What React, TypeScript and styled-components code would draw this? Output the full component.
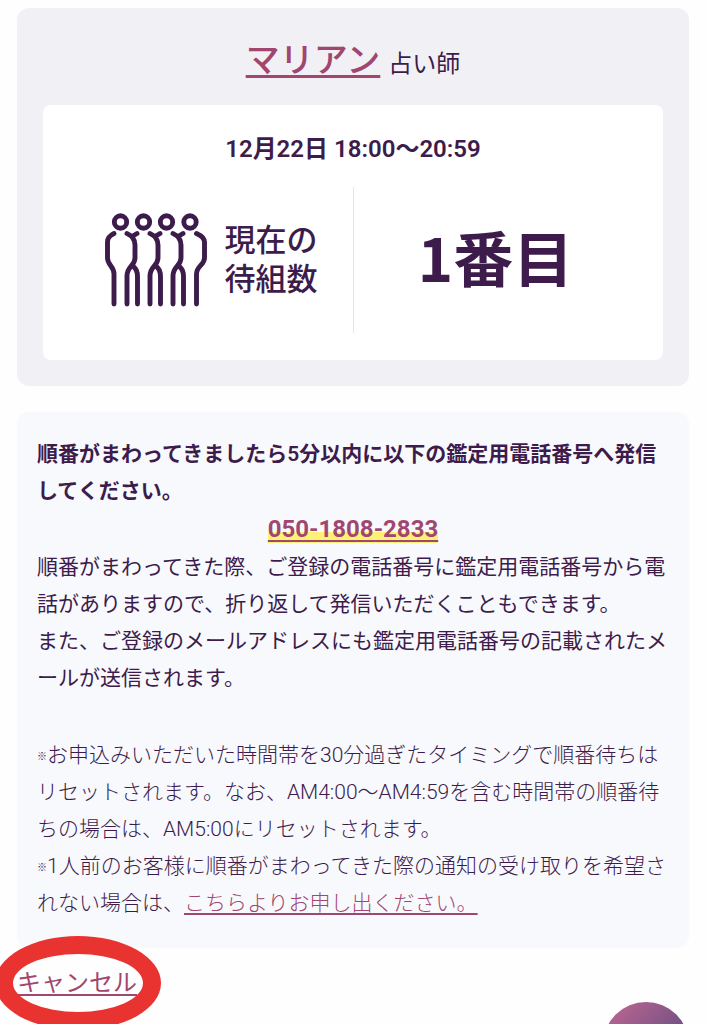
import React from "react";
import styled, { createGlobalStyle } from "styled-components";

const ink = "#3d1c4c";
const rose = "#a1466f";

const GlobalStyle = createGlobalStyle`
  *, *::before, *::after { box-sizing: border-box; }
  body {
    margin: 0;
    background: #fefefe;
    color: ${ink};
    font-family: Roboto, "Noto Sans CJK JP", sans-serif;
  }
  p, h1 { margin: 0; font-weight: inherit; }
`;

const Page = styled.main`
  display: flex;
  flex-direction: column;
  gap: 26px;
  padding: 8px 17px 32px;
  overflow: hidden;
`;

const StatusCard = styled.section`
  padding: 26px;
  border-radius: 12px;
  background: #f1f0f5;
`;

const AdvisorTitle = styled.h1`
  display: flex;
  justify-content: center;
  align-items: baseline;
  gap: 8px;
  height: 71px;
  font-size: 24px;
  line-height: 52px;
`;

const AdvisorLink = styled.a`
  color: ${rose};
  font-size: 34px;
  font-weight: 500;
  text-decoration: underline;
  text-decoration-thickness: 3px;
  text-underline-offset: 3px;
`;

const QueuePanel = styled.div`
  padding: 26px 26px 27px;
  border-radius: 8px;
  background: #fff;
`;

const Slot = styled.p`
  text-align: center;
  font-size: 24px;
  line-height: 36px;
  font-weight: 600;
`;

const QueueRow = styled.div`
  display: grid;
  grid-template-columns: 1fr 1fr;
  margin-top: 20px;
  min-height: 146px;
`;

const QueueCell = styled.div`
  display: flex;
  align-items: center;
  justify-content: center;
  gap: 16px;
  & + & { border-left: 1px solid #e3e5ea; }
`;

const QueueLabel = styled.p`
  font-size: 31px;
  line-height: 39px;
  font-weight: 500;
`;

const QueueNumber = styled.p`
  padding-bottom: 8px;
  font-family: "Noto Sans CJK JP", sans-serif;
  font-size: 60px;
  line-height: 72px;
  font-weight: 700;
`;

const GuideCard = styled.section`
  display: flex;
  flex-direction: column;
  gap: 1px;
  padding: 24px 20px 26px;
  border-radius: 12px;
  background: #f8f9fc;
  font-size: 21px;
  line-height: 37px;
  line-break: anywhere;
`;

const Lead = styled.p`
  font-weight: 600;
`;

const PhoneLine = styled.p`
  text-align: center;
  font-size: 24px;
`;

const PhoneLink = styled.a`
  color: ${rose};
  font-weight: 700;
  text-decoration: underline;
  text-decoration-thickness: 2px;
  text-underline-offset: 3px;
  background: linear-gradient(transparent 60%, #fff176 60%);
`;

const Notes = styled.div`
  margin-top: 39px;
  font-weight: 300;
`;

const Mark = styled.span`
  font-size: 10px;
  line-height: 1;
  vertical-align: 2px;
`;

const TextLink = styled.a`
  color: ${rose};
  text-decoration: underline;
  text-decoration-thickness: 2px;
  text-underline-offset: 3px;
`;

const CancelRow = styled.div`
  display: flex;
  margin-top: -9px;
`;

const CancelWrap = styled.div`
  position: relative;
  font-size: 24px;
  line-height: 36px;
`;

const Ring = styled.span`
  position: absolute;
  inset: -29px -24px -29px -22px;
  border: 18px solid #e93330;
  border-radius: 50%;
  pointer-events: none;
`;

const FloatingButton = styled.button`
  position: fixed;
  right: 17px;
  bottom: -64px;
  width: 86px;
  height: 86px;
  padding: 0;
  border: 0;
  border-radius: 50%;
  background: linear-gradient(135deg, #b86490 10%, #6d5083 65%, #4a3c72);
`;

const PeopleIcon = () => (
  <svg width="104" height="96" viewBox="0 0 104 96" fill="none" stroke={ink} strokeLinecap="round" strokeLinejoin="round" strokeWidth="4.900" aria-hidden="true">
    <circle cx="15.500" cy="10" r="6.200" />
    <circle cx="38.500" cy="10" r="6.200" />
    <circle cx="61.500" cy="10" r="6.200" />
    <circle cx="85" cy="10" r="6.200" />
    <path d="M9 21.500 C4 24 2.500 26 2.500 30 V46 C2.500 53 9 54 9 62 V92" />
    <path d="M91.500 21.500 C97 24 99.500 26 99.500 30 V46 C99.500 53 91.500 54 91.500 62 V92" />
    {[0, 23, 46].map((x) => (
      <g key={x} transform={`translate(${x} 0)`}>
        <path d="M22 21.500 L27 24.500 L32 21.500" />
        <path d="M27 24.500 C29.500 28 30 30 30 33 V46 C30 54 22 54 22 64 V92" />
        <path d="M28 54 C31 57 32.500 59 32.500 65 V92" />
      </g>
    ))}
  </svg>
);

export default function App() {
  return (
    <>
      <GlobalStyle />
      <Page lang="ja">
        <StatusCard>
          <AdvisorTitle>
            <AdvisorLink href="#advisor">マリアン</AdvisorLink>
            <span>占い師</span>
          </AdvisorTitle>
          <QueuePanel>
            <Slot>12月22日 18:00〜20:59</Slot>
            <QueueRow>
              <QueueCell>
                <PeopleIcon />
                <QueueLabel>
                  現在の
                  <br />
                  待組数
                </QueueLabel>
              </QueueCell>
              <QueueCell>
                <QueueNumber>1番目</QueueNumber>
              </QueueCell>
            </QueueRow>
          </QueuePanel>
        </StatusCard>

        <GuideCard>
          <Lead>順番がまわってきましたら5分以内に以下の鑑定用電話番号へ発信してください。</Lead>
          <PhoneLine>
            <PhoneLink href="tel:050-1808-2833">050-1808-2833</PhoneLink>
          </PhoneLine>
          <div>
            <p>順番がまわってきた際、ご登録の電話番号に鑑定用電話番号から電話がありますので、折り返して発信いただくこともできます。</p>
            <p>また、ご登録のメールアドレスにも鑑定用電話番号の記載されたメールが送信されます。</p>
          </div>
          <Notes>
            <p>
              <Mark>※</Mark>お申込みいただいた時間帯を30分過ぎたタイミングで順番待ちはリセットされます。なお、AM4:00〜AM4:59を含む時間帯の順番待ちの場合は、AM5:00にリセットされます。
            </p>
            <p>
              <Mark>※</Mark>1人前のお客様に順番がまわってきた際の通知の受け取りを希望されない場合は、<TextLink href="#optout">こちらよりお申し出ください。</TextLink>
            </p>
          </Notes>
        </GuideCard>

        <CancelRow>
          <CancelWrap>
            <TextLink href="#cancel">キャンセル</TextLink>
            <Ring />
          </CancelWrap>
        </CancelRow>
      </Page>
      <FloatingButton type="button" aria-label="メニュー" />
    </>
  );
}
